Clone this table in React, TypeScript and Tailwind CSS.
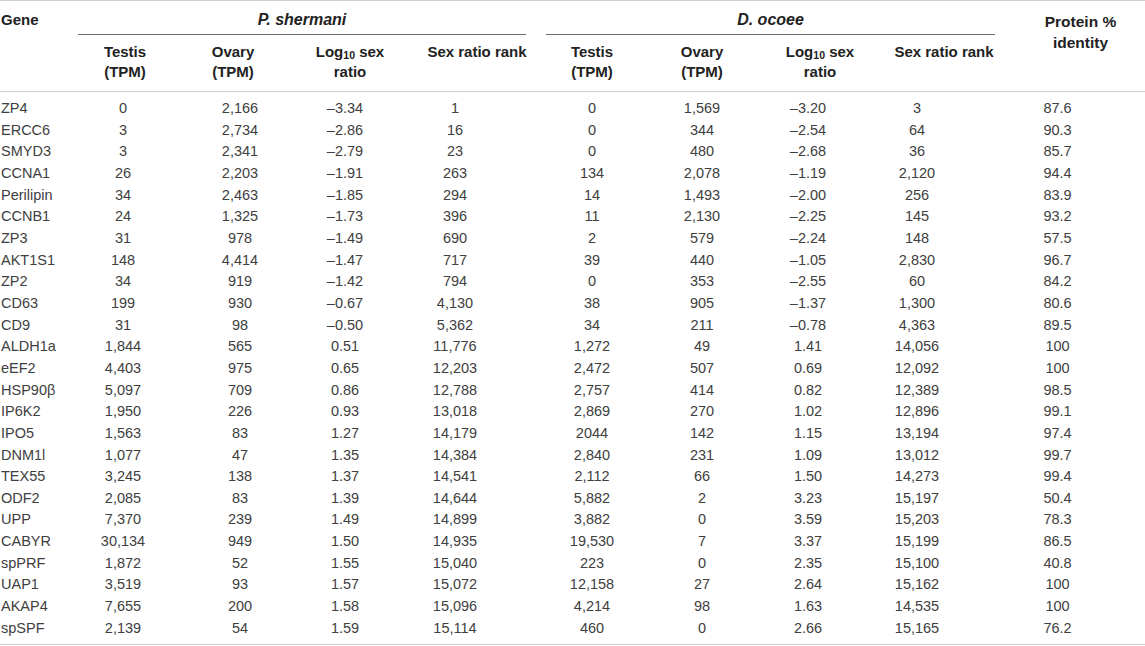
import React from "react";

const rows: string[][] = [
  ["ZP4", "0", "2,166", "–3.34", "1", "0", "1,569", "–3.20", "3", "87.6"],
  ["ERCC6", "3", "2,734", "–2.86", "16", "0", "344", "–2.54", "64", "90.3"],
  ["SMYD3", "3", "2,341", "–2.79", "23", "0", "480", "–2.68", "36", "85.7"],
  ["CCNA1", "26", "2,203", "–1.91", "263", "134", "2,078", "–1.19", "2,120", "94.4"],
  ["Perilipin", "34", "2,463", "–1.85", "294", "14", "1,493", "–2.00", "256", "83.9"],
  ["CCNB1", "24", "1,325", "–1.73", "396", "11", "2,130", "–2.25", "145", "93.2"],
  ["ZP3", "31", "978", "–1.49", "690", "2", "579", "–2.24", "148", "57.5"],
  ["AKT1S1", "148", "4,414", "–1.47", "717", "39", "440", "–1.05", "2,830", "96.7"],
  ["ZP2", "34", "919", "–1.42", "794", "0", "353", "–2.55", "60", "84.2"],
  ["CD63", "199", "930", "–0.67", "4,130", "38", "905", "–1.37", "1,300", "80.6"],
  ["CD9", "31", "98", "–0.50", "5,362", "34", "211", "–0.78", "4,363", "89.5"],
  ["ALDH1a", "1,844", "565", "0.51", "11,776", "1,272", "49", "1.41", "14,056", "100"],
  ["eEF2", "4,403", "975", "0.65", "12,203", "2,472", "507", "0.69", "12,092", "100"],
  ["HSP90β", "5,097", "709", "0.86", "12,788", "2,757", "414", "0.82", "12,389", "98.5"],
  ["IP6K2", "1,950", "226", "0.93", "13,018", "2,869", "270", "1.02", "12,896", "99.1"],
  ["IPO5", "1,563", "83", "1.27", "14,179", "2044", "142", "1.15", "13,194", "97.4"],
  ["DNM1l", "1,077", "47", "1.35", "14,384", "2,840", "231", "1.09", "13,012", "99.7"],
  ["TEX55", "3,245", "138", "1.37", "14,541", "2,112", "66", "1.50", "14,273", "99.4"],
  ["ODF2", "2,085", "83", "1.39", "14,644", "5,882", "2", "3.23", "15,197", "50.4"],
  ["UPP", "7,370", "239", "1.49", "14,899", "3,882", "0", "3.59", "15,203", "78.3"],
  ["CABYR", "30,134", "949", "1.50", "14,935", "19,530", "7", "3.37", "15,199", "86.5"],
  ["spPRF", "1,872", "52", "1.55", "15,040", "223", "0", "2.35", "15,100", "40.8"],
  ["UAP1", "3,519", "93", "1.57", "15,072", "12,158", "27", "2.64", "15,162", "100"],
  ["AKAP4", "7,655", "200", "1.58", "15,096", "4,214", "98", "1.63", "14,535", "100"],
  ["spSPF", "2,139", "54", "1.59", "15,114", "460", "0", "2.66", "15,165", "76.2"],
];

const Log = () => (
  <>
    Log<sub className="text-[10.5px] bottom-[-0.2em]">10</sub> sex
    <br />
    ratio
  </>
);

export default function App() {
  return (
    <div
      className="w-[1145px] h-[646px] bg-white text-[14.5px] overflow-hidden"
      style={{ fontFamily: '"Liberation Sans", Arial, Helvetica, sans-serif' }}
    >
      <div className="border-t border-[#d2d2d2] border-b flex text-[#222] font-bold text-[15px]">
        <div className="w-[1016px]">
          <div className="flex leading-[20px]">
            <div className="w-[78px] pl-[1px] pt-[9px]">Gene</div>
            <div className="w-[448px] pt-[9px] pb-[4px] text-center italic text-[16px] border-b border-[#6a6a6a]">
              P. shermani
            </div>
            <div className="w-[449px] ml-[20px] pt-[9px] pb-[4px] text-center italic text-[16px] border-b border-[#6a6a6a]">
              D. ocoee
            </div>
          </div>
          <div className="grid grid-cols-[78px_94px_122px_112px_142px_88px_132px_104px_144px] pt-[7px] pb-[9px] leading-[20px] text-center whitespace-nowrap">
            <div />
            <div>
              Testis
              <br />
              (TPM)
            </div>
            <div>
              Ovary
              <br />
              (TPM)
            </div>
            <div>
              <Log />
            </div>
            <div>Sex ratio rank</div>
            <div>
              Testis
              <br />
              (TPM)
            </div>
            <div>
              Ovary
              <br />
              (TPM)
            </div>
            <div>
              <Log />
            </div>
            <div>Sex ratio rank</div>
          </div>
        </div>
        <div className="flex-1 text-center pt-[10px] leading-[21px] text-[15.5px]">
          Protein %
          <br />
          identity
        </div>
      </div>
      <div className="pt-[6px] pb-[5px] border-b border-[#d2d2d2] text-[#404040]">
        {rows.map((r, i) => (
          <div
            key={i}
            className="grid grid-cols-[78px_90px_144px_66px_154px_120px_100px_112px_106px_175px] h-[21.67px] leading-[21.67px] whitespace-nowrap"
          >
            {r.map((c, j) => (
              <div key={j} className={j === 0 ? "pl-[1px]" : "text-center"}>
                {c}
              </div>
            ))}
          </div>
        ))}
      </div>
    </div>
  );
}
